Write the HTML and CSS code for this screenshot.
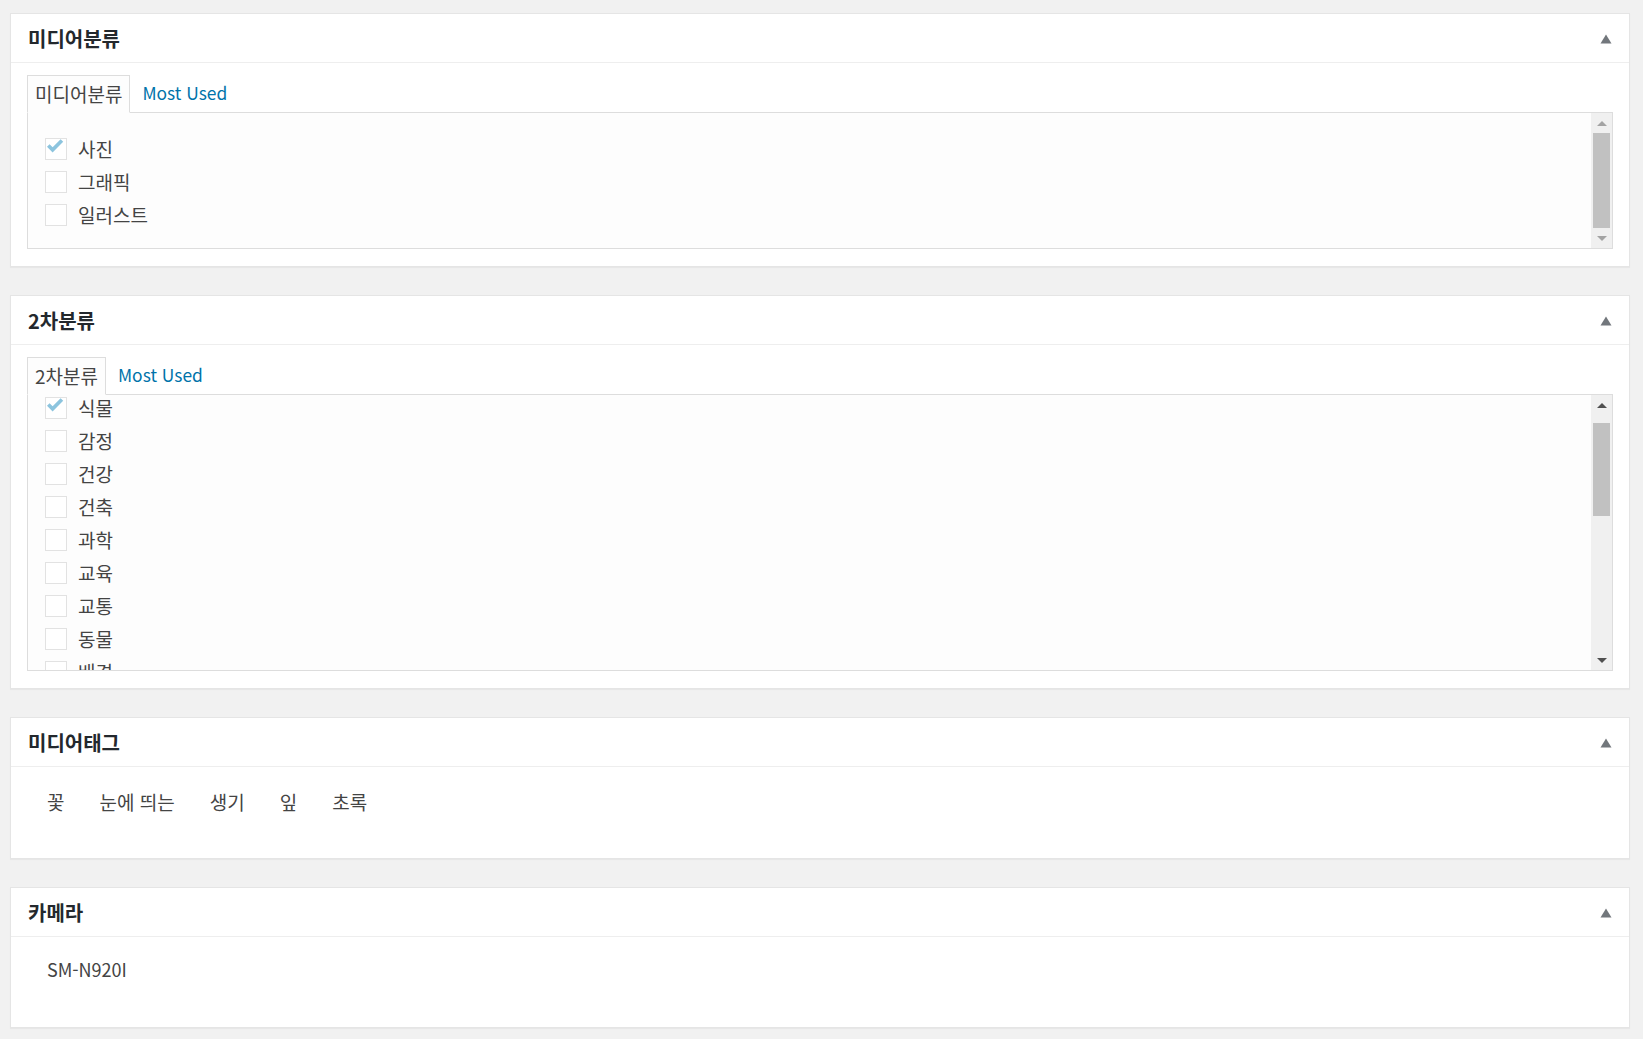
FILE: index.html
```html
<!DOCTYPE html>
<html lang="ko">
<head>
    <meta charset="UTF-8">
    <meta name="viewport" content="width=device-width, initial-scale=1.0">
    <title>미디어 분류</title>
    <link rel="stylesheet" href="styles.css">
</head>
<body>
    <div class="wrap">
        <div class="postbox">
            <div class="postbox-header">
                <h2>미디어분류</h2>
                <span class="handle"><svg width="12" height="10" viewBox="0 0 12 10"><polygon points="0.5,9.5 6,0.5 11.5,9.5" fill="#72777c"/></svg></span>
            </div>
            <div class="inside">
                <ul class="tabs">
                    <li class="tab active">미디어분류</li>
                    <li class="tab"><a href="#">Most Used</a></li>
                </ul>
                <div class="tabs-panel panel-short">
                    <ul class="checklist">
                        <li><span class="checkbox checked"><svg width="22" height="22" viewBox="0 0 22 22"><path d="M2 8.8 L4.6 6.3 L7.6 9.3 L15.6 1.2 L18.2 3.7 L7.6 14.6 Z" fill="#8cc4de"/></svg></span>사진</li>
                        <li><span class="checkbox"></span>그래픽</li>
                        <li><span class="checkbox"></span>일러스트</li>
                    </ul>
                    <div class="scrollbar">
                        <span class="sb-btn up"></span>
                        <div class="sb-track"><div class="sb-thumb thumb-full"></div></div>
                        <span class="sb-btn down"></span>
                    </div>
                </div>
            </div>
        </div>

        <div class="postbox">
            <div class="postbox-header">
                <h2>2차분류</h2>
                <span class="handle"><svg width="12" height="10" viewBox="0 0 12 10"><polygon points="0.5,9.5 6,0.5 11.5,9.5" fill="#72777c"/></svg></span>
            </div>
            <div class="inside">
                <ul class="tabs">
                    <li class="tab active">2차분류</li>
                    <li class="tab"><a href="#">Most Used</a></li>
                </ul>
                <div class="tabs-panel panel-tall">
                    <ul class="checklist scrolled">
                        <li><span class="checkbox checked"><svg width="22" height="22" viewBox="0 0 22 22"><path d="M2 8.8 L4.6 6.3 L7.6 9.3 L15.6 1.2 L18.2 3.7 L7.6 14.6 Z" fill="#8cc4de"/></svg></span>식물</li>
                        <li><span class="checkbox"></span>감정</li>
                        <li><span class="checkbox"></span>건강</li>
                        <li><span class="checkbox"></span>건축</li>
                        <li><span class="checkbox"></span>과학</li>
                        <li><span class="checkbox"></span>교육</li>
                        <li><span class="checkbox"></span>교통</li>
                        <li><span class="checkbox"></span>동물</li>
                        <li><span class="checkbox"></span>배경</li>
                    </ul>
                    <div class="scrollbar active">
                        <span class="sb-btn up"></span>
                        <div class="sb-track"><div class="sb-thumb thumb-part"></div></div>
                        <span class="sb-btn down"></span>
                    </div>
                </div>
            </div>
        </div>

        <div class="postbox">
            <div class="postbox-header">
                <h2>미디어태그</h2>
                <span class="handle"><svg width="12" height="10" viewBox="0 0 12 10"><polygon points="0.5,9.5 6,0.5 11.5,9.5" fill="#72777c"/></svg></span>
            </div>
            <div class="inside inside-tags">
                <div class="tagchecklist">
                    <span>꽃</span>
                    <span>눈에 띄는</span>
                    <span>생기</span>
                    <span>잎</span>
                    <span>초록</span>
                </div>
            </div>
        </div>

        <div class="postbox">
            <div class="postbox-header">
                <h2>카메라</h2>
                <span class="handle"><svg width="12" height="10" viewBox="0 0 12 10"><polygon points="0.5,9.5 6,0.5 11.5,9.5" fill="#72777c"/></svg></span>
            </div>
            <div class="inside inside-text">
                <p>SM-N920I</p>
            </div>
        </div>
    </div>
</body>
</html>
```

FILE: styles.css
```css
body {
    background-color: #f1f1f1;
    font-family: "Noto Sans CJK KR", "Noto Sans", sans-serif;
    color: #444;
    margin: 0;
    padding: 0;
}
.wrap {
    padding: 13px 13px 0 10px;
}
.postbox {
    background: #fff;
    border: 1px solid #e5e5e5;
    box-shadow: 0 1px 1px rgba(0, 0, 0, 0.04);
    margin-bottom: 28px;
}
.postbox-header {
    height: 48px;
    border-bottom: 1px solid #eee;
    display: flex;
    align-items: center;
    justify-content: space-between;
    padding: 0 17px;
}
.postbox-header h2 {
    margin: 0;
    padding-top: 2px;
    font-size: 20px;
    font-weight: 700;
    color: #23282d;
    line-height: 26px;
}
.handle {
    display: flex;
    margin-top: 1px;
}
.inside {
    padding: 12px 16px 17px 16px;
}
.tabs {
    list-style: none;
    margin: 0;
    padding: 0;
    display: flex;
    align-items: flex-end;
}
.tab {
    height: 36px;
    line-height: 36px;
    font-size: 19px;
    padding: 0 12px;
}
.tab.active {
    position: relative;
    padding: 0 7px;
    background: #fdfdfd;
    border: 1px solid #ddd;
    border-bottom-color: #fdfdfd;
    margin-bottom: -1px;
    color: #444;
}
.tab a {
    font-size: 17.4px;
    line-height: 33px;
    display: block;
    color: #0073aa;
    text-decoration: none;
}
.tabs-panel {
    background: #fdfdfd;
    border: 1px solid #ddd;
    display: flex;
    overflow: hidden;
}
.panel-short {
    height: 135px;
}
.panel-tall {
    height: 275px;
}
.checklist {
    flex: 1;
    list-style: none;
    margin: 0;
    padding: 25px 0 0 17px;
}
.checklist.scrolled {
    padding-top: 2px;
}
.checklist li {
    display: flex;
    align-items: center;
    height: 22px;
    line-height: 22px;
    margin-bottom: 11px;
    font-size: 19px;
    color: #444;
}
.checkbox {
    width: 20px;
    height: 20px;
    border: 1px solid #e2e2e2;
    background: #fff;
    margin-right: 11px;
    display: flex;
    flex-shrink: 0;
}
.checkbox svg {
    margin: -1px;
}
.scrollbar {
    width: 21px;
    background: #f0f0f0;
    display: flex;
    flex-direction: column;
    flex-shrink: 0;
}
.sb-btn {
    height: 20px;
    display: flex;
    align-items: center;
    justify-content: center;
}
.sb-btn::before {
    content: "";
    border-left: 5px solid transparent;
    border-right: 5px solid transparent;
}
.sb-btn.up::before {
    border-bottom: 5px solid #a3a3a3;
}
.sb-btn.down::before {
    border-top: 5px solid #a3a3a3;
}
.scrollbar.active .sb-btn.up::before {
    border-bottom-color: #505050;
}
.scrollbar.active .sb-btn.down::before {
    border-top-color: #505050;
}
.sb-track {
    flex: 1;
    padding: 0 2px;
}
.sb-thumb {
    background: #c1c1c1;
}
.thumb-full {
    height: 100%;
}
.thumb-part {
    margin-top: 8px;
    height: 93px;
}
.inside-tags {
    padding: 22px 16px 43px 36px;
}
.tagchecklist {
    display: flex;
    gap: 35px;
    font-size: 19px;
    line-height: 26px;
    color: #444;
}
.inside-text {
    padding: 19px 16px 45px 36px;
}
.inside-text p {
    margin: 0;
    font-size: 18px;
    line-height: 26px;
    color: #444;
}
```
